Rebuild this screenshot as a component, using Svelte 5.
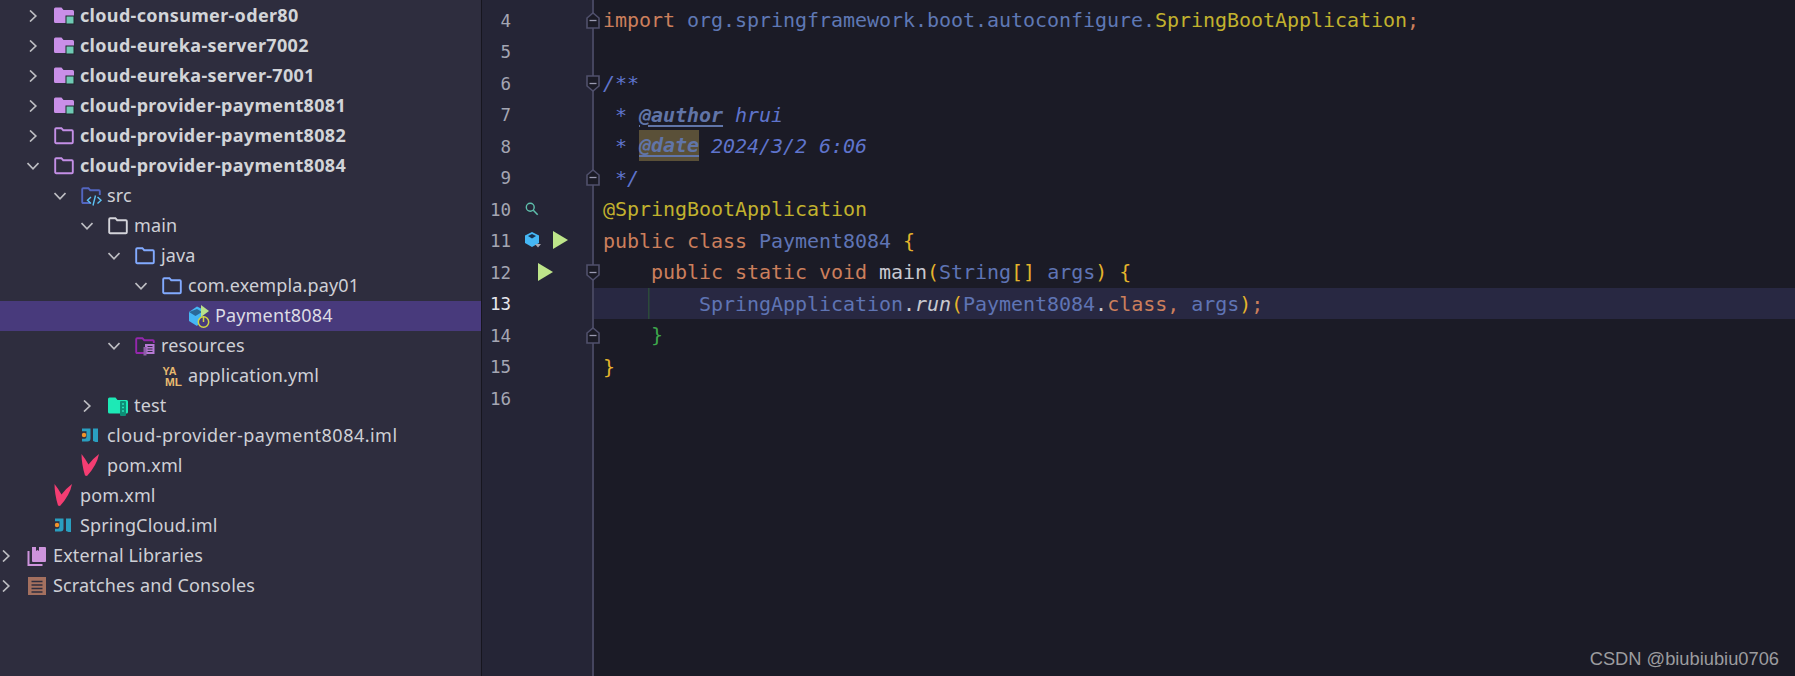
<script>
  const tree = [
    { l: 1, a: 'r', i: 'mod', t: 'cloud-consumer-oder80', b: true },
    { l: 1, a: 'r', i: 'mod', t: 'cloud-eureka-server7002', b: true },
    { l: 1, a: 'r', i: 'mod', t: 'cloud-eureka-server-7001', b: true },
    { l: 1, a: 'r', i: 'mod', t: 'cloud-provider-payment8081', b: true },
    { l: 1, a: 'r', i: 'pf', t: 'cloud-provider-payment8082', b: true },
    { l: 1, a: 'd', i: 'pf', t: 'cloud-provider-payment8084', b: true },
    { l: 2, a: 'd', i: 'src', t: 'src' },
    { l: 3, a: 'd', i: 'main', t: 'main' },
    { l: 4, a: 'd', i: 'java', t: 'java' },
    { l: 5, a: 'd', i: 'java', t: 'com.exempla.pay01' },
    { l: 6, a: '', i: 'boot', t: 'Payment8084', s: true },
    { l: 4, a: 'd', i: 'res', t: 'resources' },
    { l: 5, a: '', i: 'yml', t: 'application.yml' },
    { l: 3, a: 'r', i: 'test', t: 'test' },
    { l: 2, a: '', i: 'iml', t: 'cloud-provider-payment8084.iml', w: true },
    { l: 2, a: '', i: 'mvn', t: 'pom.xml' },
    { l: 1, a: '', i: 'mvn', t: 'pom.xml' },
    { l: 1, a: '', i: 'iml', t: 'SpringCloud.iml' },
    { l: 0, a: 'r', i: 'lib', t: 'External Libraries' },
    { l: 0, a: 'r', i: 'scr', t: 'Scratches and Consoles' }
  ];

  const code = [
    { n: 4, fold: 'end', c: [['kw', 'import'], ['', ' '], ['pk', 'org.springframework.boot.autoconfigure.'], ['an', 'SpringBootApplication'], ['kw', ';']] },
    { n: 5, c: [] },
    { n: 6, fold: 'start', c: [['dc', '/**']] },
    { n: 7, c: [['dc', ' * '], ['tg', '@author'], ['dc', ' hrui']] },
    { n: 8, c: [['dc', ' * '], ['tg hl', '@date'], ['dc', ' 2024/3/2 6:06']] },
    { n: 9, fold: 'end', c: [['dc', ' */']] },
    { n: 10, g: 'search', c: [['an', '@SpringBootApplication']] },
    { n: 11, g: 'cube', c: [['kw', 'public class '], ['cl', 'Payment8084 '], ['by', '{']] },
    { n: 12, g: 'run', fold: 'start', c: [['', '    '], ['kw', 'public static void '], ['fn', 'main'], ['by', '('], ['cl', 'String'], ['by', '[]'], ['', ' '], ['cl', 'args'], ['by', ')'], ['', ' '], ['by', '{']] },
    { n: 13, cur: true, c: [['', '        '], ['cl', 'SpringApplication'], ['fn', '.'], ['it', 'run'], ['by', '('], ['cl', 'Payment8084'], ['fn', '.'], ['kw', 'class, '], ['cl', 'args'], ['by', ')'], ['kw', ';']] },
    { n: 14, fold: 'end', c: [['', '    '], ['bg', '}']] },
    { n: 15, c: [['by', '}']] },
    { n: 16, c: [] }
  ];
</script>

{#snippet folder(color)}
  <path d="M1.2 5V3.2q0-1 1-1h5.2l1.8 2h8.6q1 0 1 1v11q0 1-1 1H2.2q-1 0-1-1z" fill="none" stroke={color} stroke-width="1.9" />
{/snippet}

{#snippet icon(name)}
  <svg class="ic" viewBox="0 0 20 20" width="20" height="20" aria-hidden="true">
    {#if name === 'mod'}
      <path d="M0 3q0-1.500 1.500-1.500h6L9.500 4h9q1.500 0 1.500 1.500V15q0 2-2 2H1.500Q0 17 0 15.500z" fill="#c98fe8" />
      <rect x="11.500" y="9.500" width="9" height="9" fill="#20252a" />
      <rect x="12.500" y="10.500" width="7" height="7" fill="#6fc9b4" />
    {:else if name === 'pf'}
      {@render folder('#c48fe6')}
    {:else if name === 'main'}
      {@render folder('#d4d4da')}
    {:else if name === 'java'}
      {@render folder('#82aaff')}
    {:else if name === 'src'}
      <path d="M1.200 16V3.200q0-1 1-1h5.200l1.800 2h8.600q1 0 1 1V9M9 17H2.200q-1 0-1-1" fill="none" stroke="#5366c0" stroke-width="1.900" />
      <path d="M10 11l-3.500 3.300L10 17.500M16.500 11l3.500 3.300-3.500 3.200M14.500 9.500l-2.500 10" fill="none" stroke="#5cc3f5" stroke-width="1.400" />
    {:else if name === 'res'}
      <path d="M1.200 16V3.200q0-1 1-1h5.200l1.800 2h8.600q1 0 1 1V7M9 17H2.200q-1 0-1-1" fill="none" stroke="#9427ad" stroke-width="1.900" />
      <rect x="10" y="8" width="9.500" height="10" fill="#b679d4" />
      <rect x="8.500" y="11" width="3" height="8.500" fill="#8d5fa8" />
      <path d="M12.500 10.500h5M12.500 13h5M12.500 15.500h5" stroke="#2e2d3e" stroke-width="1.200" />
    {:else if name === 'test'}
      <path d="M0 3q0-1.500 1.500-1.500h6L9.500 4h9q1.500 0 1.500 1.500V16q0 1.500-1.500 1.500H1.500Q0 17.500 0 16z" fill="#1de9b6" />
      <rect x="12" y="5" width="6" height="15" rx="1" fill="#0e8e76" />
      <path d="M14 8h2M14 11.500h2M14 15h2" stroke="#27e0b8" stroke-width="1.500" />
    {:else if name === 'boot'}
      <path d="M0 6l8-5.500 5 2.500v11L8 20 0 15z" fill="#45b7f5" />
      <path d="M0 6l6.500 4L13 6 8 3z" fill="#2a6a98" />
      <path d="M12 -1l8 6-8 6z" fill="#b8e08a" />
      <circle cx="14.500" cy="16" r="5.200" fill="#483a7c" stroke="#d2d640" stroke-width="1.500" />
      <path d="M14.500 10v6" stroke="#d2d640" stroke-width="1.500" />
    {:else if name === 'yml'}
      <text class="y" x="0.500" y="8.500" textLength="14" lengthAdjust="spacingAndGlyphs">YA</text>
      <text class="y" x="3" y="20" textLength="17" lengthAdjust="spacingAndGlyphs">ML</text>
    {:else if name === 'iml'}
      <path d="M1 2.500h8.500v10q0 3-3 3H1v-2.800h2.800q1.700 0 1.700-2V5.200H1zM12 2.500h5v13.500h-2.500l-2.500-1z" fill="#2a9fc0" />
      <circle cx="3" cy="9" r="2.200" fill="#f0932b" />
    {:else if name === 'mvn'}
      <path d="M0.500 -2Q4.500 3 7.500 8.500 12 2.500 18 -2 16 9 6 20L4 19.500Q0.500 8 0.500 -2z" fill="#f43d72" />
    {:else if name === 'lib'}
      <path d="M5 1h4v4l1.500-1L12 5V1h6q1 0 1 1v13q0 1-1 1H6q-1 0-1-1z" fill="#cd94dc" />
      <path d="M1.500 5v14h14" fill="none" stroke="#cd94dc" stroke-width="2" />
    {:else if name === 'scr'}
      <rect x="1" y="1" width="18" height="18" fill="#a4705f" />
      <path d="M4.500 5.500h11M4.500 9h11M4.500 12.500h11M4.500 16h11" stroke="#2e2d3e" stroke-width="1.700" />
    {/if}
  </svg>
{/snippet}

{#snippet fold(kind)}
  <svg class="fold" viewBox="0 0 14 17" width="14" height="17" aria-hidden="true">
    {#if kind === 'start'}
      <path d="M1 1h12v10l-6 5-6-5z" fill="#1b1b26" stroke="#50506c" stroke-width="1.600" />
    {:else}
      <path d="M1 16h12V6L7 1 1 6z" fill="#1b1b26" stroke="#50506c" stroke-width="1.600" />
    {/if}
    <path d="M3.500 8.500h7" stroke="#9a9ab0" stroke-width="1.300" />
  </svg>
{/snippet}

<div class="app">
  <aside class="tree">
    {#each tree as r}
      <div class="row" class:sel={r.s} class:bold={r.b} class:wide={r.w} style="padding-left:{r.l * 27}px">
        <span class="arrow">
          {#if r.a}
            <svg viewBox="0 0 12 12" width="12" height="12" class:down={r.a === 'd'} aria-hidden="true">
              <path d="M3 .5l5.800 5.500L3 11.500" fill="none" stroke="#bdbdc2" stroke-width="1.700" />
            </svg>
          {/if}
        </span>
        <span class="iconbox">{@render icon(r.i)}</span>
        <span class="label">{r.t}</span>
      </div>
    {/each}
  </aside>

  <main class="editor">
    <div class="gutter">
      {#each code as ln}
        <div class="gl" class:gcur={ln.cur}>
          <span class="num">{ln.n}</span>
          {#if ln.g === 'search'}
            <svg class="g1" viewBox="0 0 16 16" width="14" height="14" aria-hidden="true">
              <circle cx="6" cy="6" r="4.500" fill="none" stroke="#5fc0ad" stroke-width="1.600" />
              <path d="M9.500 9.500l5 5" stroke="#5fc0ad" stroke-width="1.800" />
            </svg>
          {:else if ln.g === 'cube'}
            <svg class="g1" viewBox="0 0 16 16" width="16" height="16" aria-hidden="true">
              <path d="M7 0l7 3.500V11l-7 4-7-4V3.500z" fill="#45b7f5" />
              <path d="M3 4l4-2 4 2-4 2.500z" fill="#17314f" />
              <path d="M10 12h6l-3 3.500z" fill="#a8a8b0" />
            </svg>
            <svg class="g2" viewBox="0 0 15 18" width="15" height="18" aria-hidden="true"><path d="M0 0l15 9-15 9z" fill="#bee58a" /></svg>
          {:else if ln.g === 'run'}
            <svg class="g3" viewBox="0 0 15 18" width="15" height="18" aria-hidden="true"><path d="M0 0l15 9-15 9z" fill="#bee58a" /></svg>
          {/if}
          {#if ln.fold}<span class="foldbox">{@render fold(ln.fold)}</span>{/if}
        </div>
      {/each}
    </div>
    <div class="code">
      {#each code as ln}
        <div class="cl-line" class:cur={ln.cur}>{#each ln.c as tk}<span class={tk[0]}>{tk[1]}</span>{/each}</div>
      {/each}
    </div>
    <div class="mark">CSDN @biubiubiu0706</div>
  </main>
</div>

<style>
  :global(body) { margin: 0; background: #1b1b26; }
  .app { display: flex; width: 1795px; height: 676px; overflow: hidden; }

  .tree {
    width: 482px; flex: none; padding-top: 1px; box-sizing: border-box;
    background: #2e2d3e; border-right: 1px solid #17161f;
    font: 18px/30px "Noto Sans", sans-serif; color: #ced0d6; letter-spacing: .15px;
  }
  .row { display: flex; align-items: center; height: 30px; white-space: nowrap; }
  .row.sel { background: #483a7c; color: #dcdce4; }
  .row.bold { font-weight: 700; color: #d2d4d8; letter-spacing: .32px; }
  .row.wide { letter-spacing: .48px; }
  .arrow { width: 27px; flex: none; display: flex; justify-content: center; padding-right: 16px; box-sizing: border-box; }
  .arrow svg.down { transform: rotate(90deg); }
  .arrow svg { flex: none; }
  .iconbox { width: 26px; flex: none; display: flex; align-items: center; }
  .label { padding-bottom: 2px; }
  .ic { display: block; overflow: visible; }
  .y { font: 700 10.500px "Liberation Sans", sans-serif; fill: #e8b96f; letter-spacing: 0; }

  .editor { position: relative; flex: 1; display: flex; background: #1b1b26; min-width: 0; }
  .gutter {
    width: 112px; flex: none; box-sizing: border-box; padding-top: 4px;
    background: #252536; border-right: 2px solid #45455e;
  }
  .gl { position: relative; display: flex; align-items: center; height: 31.500px; }
  .num {
    width: 29px; flex: none; text-align: right; padding-top: 2px;
    font: 17.500px "DejaVu Sans Mono", monospace; color: #a4a6b3;
  }
  .gcur .num { color: #e8e8ee; }
  .g1 { margin-left: 14px; flex: none; }
  .g2 { margin-left: 12px; flex: none; }
  .g3 { margin-left: 27px; flex: none; }
  .foldbox { position: absolute; right: -8px; top: 7.500px; display: flex; }

  .code { flex: 1; padding-top: 4px; min-width: 0; }
  .cl-line {
    height: 31.500px; line-height: 33.500px; padding-left: 9px; white-space: pre;
    font-family: "DejaVu Sans Mono", monospace; font-size: 20px; letter-spacing: -.04px; color: #c8c8d0;
  }
  .cur { background: linear-gradient(#2c4a3a, #2c4a3a) 54px 0 / 1.500px 100% no-repeat, #282842; }
  .kw { color: #cc7f5c; }
  .pk { color: #5f78b4; }
  .an { color: #c2b22e; }
  .dc { color: #5f74cc; font-style: italic; }
  .tg { color: #6175a8; font-style: italic; font-weight: 700; text-decoration: underline; text-underline-offset: 3px; }
  .hl { background: #5a5038; display: inline-block; line-height: 31px; vertical-align: top; }
  .cl { color: #5f74b4; }
  .fn { color: #c8c8d0; }
  .it { color: #c8c8d0; font-style: italic; }
  .by { color: #e4b42c; }
  .bg { color: #3ea84c; }

  .mark {
    position: absolute; right: 16px; bottom: 6px;
    font: 18.300px "Liberation Sans", sans-serif; color: #9c9c9f;
  }
</style>
